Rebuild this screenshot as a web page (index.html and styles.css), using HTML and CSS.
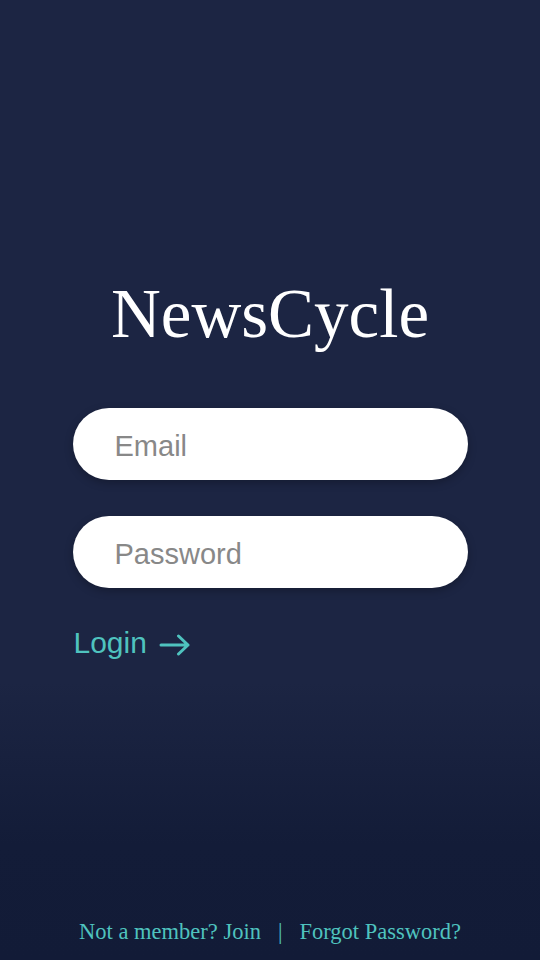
FILE: index.html
```html
<!DOCTYPE html>
<html lang="en">
<head>
<meta charset="utf-8">
<title>NewsCycle</title>
<link rel="stylesheet" href="styles.css">
</head>
<body>
<main class="screen">
  <section class="login">
    <h1 class="brand">NewsCycle</h1>
    <form class="form">
      <input class="field" type="email" placeholder="Email">
      <input class="field" type="password" placeholder="Password">
      <button class="submit" type="button">
        <span>Login</span>
        <svg class="arrow" width="32" height="22" viewBox="0 0 32 22" aria-hidden="true">
          <path d="M2 11 H29 M19.5 2 L29 11 L19.5 20" fill="none" stroke="currentColor" stroke-width="3" stroke-linecap="round" stroke-linejoin="round"/>
        </svg>
      </button>
    </form>
  </section>
  <footer class="footer">
    <a class="link" href="#">Not a member? Join</a>
    <span class="sep">|</span>
    <a class="link" href="#">Forgot Password?</a>
  </footer>
</main>
</body>
</html>
```
FILE: styles.css
```css
* { box-sizing: border-box; }
html, body { margin: 0; padding: 0; }
body {
  width: 540px;
  height: 960px;
  overflow: hidden;
  background: linear-gradient(to bottom, #1c2543 0%, #1c2543 71%, #131c38 88%, #121b37 100%);
  font-family: "Liberation Sans", Arial, sans-serif;
}
.screen {
  height: 960px;
  display: flex;
  flex-direction: column;
  align-items: center;
}
.login {
  width: 395px;
  margin-top: 270px;
  display: flex;
  flex-direction: column;
  align-items: center;
}
.brand {
  margin: 0;
  font-family: "Liberation Serif", "Times New Roman", serif;
  font-weight: normal;
  font-size: 69px;
  line-height: 88px;
  color: #ffffff;
  letter-spacing: 0;
}
.form {
  width: 395px;
  margin-top: 50px;
  display: flex;
  flex-direction: column;
  gap: 36px;
}
.field {
  width: 100%;
  height: 72px;
  border: none;
  border-radius: 36px;
  background: #ffffff;
  padding: 5px 0 0 42px;
  font-family: "Liberation Sans", Arial, sans-serif;
  font-size: 29px;
  color: #333;
  box-shadow: 0 3px 8px rgba(0, 0, 0, 0.25);
  outline: none;
}
.field::placeholder { color: #888888; }
.submit {
  align-self: flex-start;
  margin-top: -1px;
  margin-left: 1px;
  padding: 0;
  border: none;
  background: transparent;
  display: flex;
  align-items: center;
  gap: 12px;
  color: #4fc3bf;
  font-family: "Liberation Sans", Arial, sans-serif;
  font-size: 30px;
  line-height: 40px;
  cursor: pointer;
}
.arrow { display: block; margin-top: 3px; }
.footer {
  margin-top: auto;
  margin-bottom: 12px;
  display: flex;
  align-items: baseline;
  gap: 17px;
  font-family: "Liberation Serif", "Times New Roman", serif;
  font-size: 22.5px;
  line-height: 32px;
  color: #4fc3bf;
}
.link { color: #4fc3bf; text-decoration: none; }
.sep { color: #4fc3bf; }
```
